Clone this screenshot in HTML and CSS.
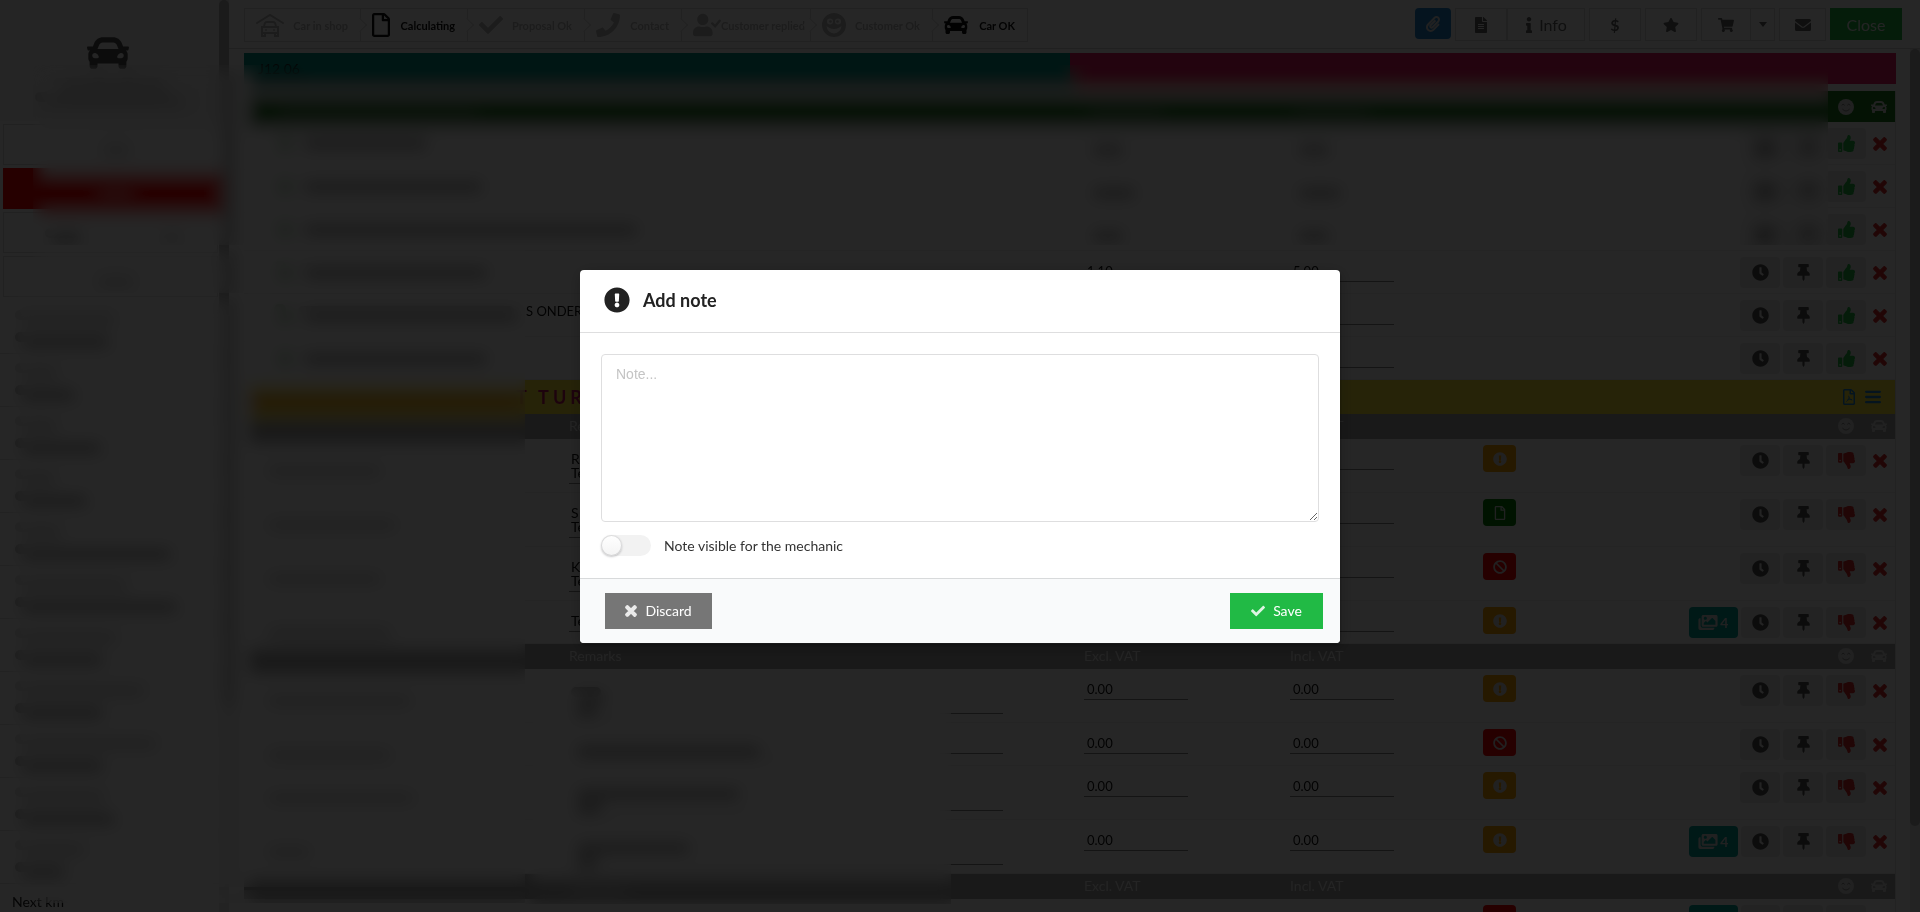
FILE: index.html
```html
<!DOCTYPE html>
<html lang="en">
<head>
  <meta charset="UTF-8">
  <meta name="viewport" content="width=device-width, initial-scale=1.0">
  <title>Workshop - Add note</title>
  <link rel="stylesheet" href="styles.css">
</head>
<body>
  <!-- Icon sprite -->
  <svg class="sprite" aria-hidden="true">
    <filter id="frost"><feGaussianBlur stdDeviation="8" edgeMode="duplicate"/><feOffset dx="5" dy="5"/></filter>
    <symbol id="car" viewBox="0 0 512 512"><path d="M499.99 176h-59.87l-16.64-41.6C406.38 91.63 365.57 64 319.5 64h-127c-46.06 0-86.88 27.63-103.99 70.4L71.87 176H12.01C4.2 176-1.53 183.34.37 190.91l6 24C7.7 220.25 12.5 224 18.01 224h20.07C24.65 235.73 16 252.78 16 272v48c0 16.12 6.16 30.67 16 41.93V416c0 17.67 14.33 32 32 32h32c17.67 0 32-14.33 32-32v-32h256v32c0 17.67 14.33 32 32 32h32c17.67 0 32-14.33 32-32v-54.07c9.84-11.25 16-25.8 16-41.93v-48c0-19.22-8.65-36.27-22.07-48H494c5.51 0 10.31-3.75 11.64-9.09l6-24c1.89-7.57-3.84-14.91-11.65-14.91zm-352.06-17.83c7.29-18.22 24.94-30.17 44.57-30.17h127c19.63 0 37.28 11.95 44.57 30.17L384 208H128l19.93-49.83zM96 319.8c-19.2 0-32-12.76-32-31.9S76.8 256 96 256s48 28.71 48 47.85-28.8 15.95-48 15.95zm320 0c-19.2 0-48 3.19-48-15.95S396.8 256 416 256s32 12.76 32 31.9-12.8 31.9-32 31.9z"/></symbol>
    <symbol id="garage" viewBox="0 0 28 24"><path d="M1 10L14 2l13 8" fill="none" stroke="currentColor" stroke-width="2" stroke-linecap="round"/><path d="M8 13l1-3q.6-1 2-1h6q1.400 0 2 1l1 3M6 14h16v6H6zM6 20v3h3v-3M19 20v3h3v-3" fill="none" stroke="currentColor" stroke-width="2"/><circle cx="10" cy="17" r="1"/><circle cx="18" cy="17" r="1"/></symbol>
    <symbol id="clock" viewBox="0 0 512 512"><path d="M256,8C119,8,8,119,8,256S119,504,256,504,504,393,504,256,393,8,256,8Zm92.49,313h0l-20,25a16,16,0,0,1-22.49,2.5h0l-67-49.72a40,40,0,0,1-15-31.23V112a16,16,0,0,1,16-16h32a16,16,0,0,1,16,16V256l58,42.5A16,16,0,0,1,348.49,321Z"/></symbol>
    <symbol id="pin" viewBox="0 0 384 512"><path d="M298.028 214.267L285.793 96H328c13.255 0 24-10.745 24-24V24c0-13.255-10.745-24-24-24H56C42.745 0 32 10.745 32 24v48c0 13.255 10.745 24 24 24h42.207L85.972 214.267C37.465 236.82 0 277.261 0 328c0 13.255 10.745 24 24 24h136v104.007c0 1.242.289 2.467.845 3.578l24 48c2.941 5.882 11.364 5.893 14.311 0l24-48a8.008 8.008 0 0 0 .845-3.578V352h136c13.255 0 24-10.745 24-24-.001-51.183-37.983-91.42-85.973-113.733z"/></symbol>
    <symbol id="up" viewBox="0 0 512 512"><path d="M104 224H24c-13.255 0-24 10.745-24 24v240c0 13.255 10.745 24 24 24h80c13.255 0 24-10.745 24-24V248c0-13.255-10.745-24-24-24zM64 472c-13.255 0-24-10.745-24-24s10.745-24 24-24 24 10.745 24 24-10.745 24-24 24zM384 81.452c0 42.416-25.97 66.208-33.277 94.548h101.723c33.397 0 59.397 27.746 59.553 58.098.084 17.938-7.546 37.249-19.439 49.197l-.11.11c9.836 23.337 8.237 56.037-9.308 79.469 8.681 25.895-.069 57.704-16.382 74.757 4.298 17.598 2.244 32.575-6.148 44.632C440.202 511.587 389.616 512 346.839 512l-2.845-.001c-48.287-.017-87.806-17.598-119.56-31.725-15.957-7.099-36.821-15.887-52.651-16.178-6.54-.12-11.783-5.457-11.783-11.998v-213.77c0-3.2 1.282-6.271 3.558-8.521 39.614-39.144 56.648-80.587 89.117-113.111 14.804-14.832 20.188-37.236 25.393-58.902C282.515 39.293 291.817 0 312 0c24 0 72 8 72 81.452z"/></symbol>
    <symbol id="down" viewBox="0 0 512 512"><path d="M0 56v240c0 13.255 10.745 24 24 24h80c13.255 0 24-10.745 24-24V56c0-13.255-10.745-24-24-24H24C10.745 32 0 42.745 0 56zm40 200c0-13.255 10.745-24 24-24s24 10.745 24 24-10.745 24-24 24-24-10.745-24-24zm272 256c-20.183 0-29.485-39.293-33.931-57.795-5.206-21.666-10.589-44.07-25.393-58.902-32.469-32.524-49.503-73.967-89.117-113.111a11.98 11.98 0 0 1-3.558-8.521V59.901c0-6.541 5.243-11.878 11.783-11.998 15.831-.29 36.694-9.079 52.651-16.178C256.189 17.598 295.709.017 343.995 0h2.844c42.777 0 93.363.413 113.774 29.737 8.392 12.057 10.446 27.034 6.148 44.632 16.312 17.053 25.063 48.863 16.382 74.757 17.544 23.432 19.143 56.132 9.308 79.469l.11.11c11.893 11.949 19.523 31.259 19.439 49.197-.156 30.352-26.157 58.098-59.553 58.098H350.723C358.03 364.34 384 388.132 384 430.548 384 504 336 512 312 512z"/></symbol>
    <symbol id="times" viewBox="-24 56 400 400"><path stroke="currentColor" stroke-width="36" d="M242.72 256l100.07-100.07c12.28-12.28 12.28-32.19 0-44.48l-22.24-22.24c-12.28-12.28-32.19-12.28-44.48 0L176 189.28 75.93 89.21c-12.28-12.28-32.19-12.28-44.48 0L9.21 111.45c-12.28 12.28-12.28 32.19 0 44.48L109.28 256 9.21 356.07c-12.28 12.28-12.28 32.19 0 44.48l22.24 22.24c12.28 12.28 32.2 12.28 44.48 0L176 322.72l100.07 100.07c12.28 12.28 32.2 12.28 44.48 0l22.24-22.24c12.28-12.28 12.28-32.19 0-44.48L242.72 256z"/></symbol>
    <symbol id="check" viewBox="0 0 512 512"><path d="M173.898 439.404l-166.4-166.4c-9.997-9.997-9.997-26.206 0-36.204l36.203-36.204c9.997-9.998 26.207-9.998 36.204 0L192 312.69 432.095 72.596c9.997-9.997 26.207-9.997 36.204 0l36.203 36.204c9.997 9.997 9.997 26.206 0 36.204l-294.4 294.401c-9.998 9.997-26.207 9.997-36.204-.001z"/></symbol>
    <symbol id="warn" viewBox="0 0 512 512"><path d="M504 256c0 136.997-111.043 248-248 248S8 392.997 8 256C8 119.083 119.043 8 256 8s248 111.083 248 248zm-248 50c-25.405 0-46 20.595-46 46s20.595 46 46 46 46-20.595 46-46-20.595-46-46-46zm-43.673-165.346l7.418 136c.347 6.364 5.609 11.346 11.982 11.346h48.546c6.373 0 11.635-4.982 11.982-11.346l7.418-136c.375-6.874-5.098-12.654-11.982-12.654h-63.383c-6.884 0-12.356 5.78-11.981 12.654z"/></symbol>
    <symbol id="ban" viewBox="0 0 512 512"><path d="M256 8C119.034 8 8 119.033 8 256s111.034 248 248 248 248-111.034 248-248S392.967 8 256 8zm130.108 117.892c65.448 65.448 70 165.481 20.677 235.637L150.47 105.216c70.204-49.356 170.226-44.735 235.638 20.676zM125.892 386.108c-65.448-65.448-70-165.481-20.677-235.637L361.53 406.784c-70.203 49.356-170.226 44.736-235.638-20.676z"/></symbol>
    <symbol id="file" viewBox="0 0 384 512"><path d="M369.9 97.9L286 14C277 5 264.8-.1 252.1-.1H48C21.5 0 0 21.5 0 48v416c0 26.5 21.5 48 48 48h288c26.5 0 48-21.5 48-48V131.9c0-12.7-5.1-25-14.1-34zM332.1 128H256V51.900l76.100 76.100zM48 464V48h160v104c0 13.300 10.700 24 24 24h104v288H48z"/></symbol>
    <symbol id="pdf" viewBox="0 0 384 512"><path d="M369.9 97.9L286 14C277 5 264.8-.1 252.1-.1H48C21.5 0 0 21.5 0 48v416c0 26.5 21.5 48 48 48h288c26.5 0 48-21.5 48-48V131.9c0-12.7-5.1-25-14.1-34zM332.1 128H256V51.900l76.100 76.100zM48 464V48h160v104c0 13.300 10.700 24 24 24h104v288H48z"/><path d="M180 215c14 60 20 110 115 140M195 270c-20 70-50 110-90 135M140 350c50-20 90-20 150-10" fill="none" stroke="currentColor" stroke-width="28"/></symbol>
    <symbol id="filealt" viewBox="0 0 384 512"><path d="M224 136V0H24C10.7 0 0 10.7 0 24v464c0 13.3 10.7 24 24 24h336c13.3 0 24-10.7 24-24V160H248c-13.2 0-24-10.8-24-24zm64 236c0 6.6-5.4 12-12 12H108c-6.6 0-12-5.4-12-12v-8c0-6.6 5.4-12 12-12h168c6.6 0 12 5.4 12 12v8zm0-64c0 6.6-5.4 12-12 12H108c-6.6 0-12-5.4-12-12v-8c0-6.6 5.4-12 12-12h168c6.6 0 12 5.4 12 12v8zm0-72v8c0 6.6-5.4 12-12 12H108c-6.6 0-12-5.4-12-12v-8c0-6.6 5.4-12 12-12h168c6.6 0 12 5.4 12 12zm96-114.1v6.1H256V0h6.100c6.400 0 12.500 2.500 17 7l97.900 98c4.500 4.500 7 10.600 7 16.900z"/></symbol>
    <symbol id="images" viewBox="0 0 576 512"><path d="M480 416v16c0 26.51-21.49 48-48 48H48c-26.51 0-48-21.49-48-48V176c0-26.51 21.49-48 48-48h16v208c0 44.112 35.888 80 80 80h336zm96-80V80c0-26.51-21.49-48-48-48H144c-26.51 0-48 21.49-48 48v256c0 26.51 21.49 48 48 48h384c26.51 0 48-21.49 48-48zM256 128c0 26.51-21.49 48-48 48s-48-21.49-48-48 21.49-48 48-48 48 21.49 48 48zm-96 144l55.515-55.515c4.686-4.686 12.284-4.686 16.971 0L272 256l135.515-135.515c4.686-4.686 12.284-4.686 16.971 0L512 208v112H160v-48z"/></symbol>
    <symbol id="star" viewBox="0 0 576 512"><path d="M259.3 17.8L194 150.2 47.9 171.5c-26.2 3.8-36.7 36.1-17.7 54.6l105.7 103-25 145.5c-4.5 26.3 23.2 46 46.4 33.7L288 439.6l130.7 68.7c23.2 12.2 50.9-7.4 46.4-33.7l-25-145.5 105.7-103c19-18.5 8.5-50.8-17.7-54.6L382 150.2 316.7 17.8c-11.7-23.6-45.6-23.9-57.4 0z"/></symbol>
    <symbol id="cart" viewBox="0 0 576 512"><path d="M528.12 301.319l47.273-208C578.806 78.301 567.391 64 551.99 64H159.208l-9.166-44.81C147.758 8.021 137.93 0 126.529 0H24C10.745 0 0 10.745 0 24v16c0 13.255 10.745 24 24 24h69.883l70.248 343.435C147.325 417.1 136 435.222 136 456c0 30.928 25.072 56 56 56s56-25.072 56-56c0-15.674-6.447-29.835-16.824-40h209.647C430.447 426.165 424 440.326 424 456c0 30.928 25.072 56 56 56s56-25.072 56-56c0-22.172-12.888-41.332-31.579-50.405l5.517-24.276c3.413-15.018-8.002-29.319-23.403-29.319H218.117l-6.545-32h293.145c11.206 0 20.92-7.754 23.403-18.681z"/></symbol>
    <symbol id="mail" viewBox="0 0 512 512"><path d="M48 64h416q48 0 48 48v18L284 300q-28 20-56 0L0 130v-18q0-48 48-48zM0 176l212 156q44 30 88 0l212-156v224q0 48-48 48H48q-48 0-48-48z"/></symbol>
    <symbol id="info" viewBox="0 0 192 512"><path d="M20 424.229h20V279.771H20c-11.046 0-20-8.954-20-20V212c0-11.046 8.954-20 20-20h112c11.046 0 20 8.954 20 20v212.229h20c11.046 0 20 8.954 20 20V492c0 11.046-8.954 20-20 20H20c-11.046 0-20-8.954-20-20v-47.771c0-11.046 8.954-20 20-20zM96 0C56.235 0 24 32.235 24 72s32.235 72 72 72 72-32.235 72-72S135.764 0 96 0z"/></symbol>
    <symbol id="clip" viewBox="0 0 448 512"><path d="M43.246 466.142c-58.43-60.289-57.341-157.511 1.386-217.581L254.392 34c44.316-45.332 116.351-45.336 160.671 0 43.89 44.894 43.943 117.329 0 162.276L232.214 383.128c-29.855 30.537-78.633 30.111-107.982-.998-28.275-29.97-27.368-77.473 1.452-106.953l143.743-146.835c6.182-6.314 16.312-6.422 22.626-.241l22.861 22.379c6.315 6.182 6.422 16.312.241 22.626L171.427 319.927c-4.932 5.045-5.236 13.428-.648 18.292 4.372 4.634 11.245 4.711 15.688.165l182.849-186.851c19.613-20.062 19.613-52.725-.011-72.798-19.189-19.627-49.957-19.637-69.154 0L90.39 293.295c-34.763 35.56-35.299 93.12-1.191 128.313 34.01 35.093 88.985 35.137 123.058.286l172.06-175.999c6.177-6.319 16.307-6.433 22.626-.256l22.877 22.364c6.319 6.177 6.434 16.307.256 22.626l-172.06 175.998c-59.576 60.938-155.943 60.216-214.77-.485z"/></symbol>
    <symbol id="phone" viewBox="0 0 512 512"><path d="M493.4 24.6l-104-24c-11.3-2.6-22.900 3.300-27.500 13.900l-48 112c-4.200 9.800-1.400 21.300 6.900 28l60.600 49.600c-36 76.700-98.900 140.500-177.200 177.200l-49.600-60.600c-6.800-8.300-18.200-11.100-28-6.900l-112 48C3.900 366.500-2 378.100.6 389.400l24 104C27.100 504.200 36.700 512 48 512c256.100 0 464-207.500 464-464 0-11.200-7.700-20.900-18.600-23.400z"/></symbol>
    <symbol id="usercheck" viewBox="0 0 640 512"><path d="M224 256c70.7 0 128-57.3 128-128S294.7 0 224 0 96 57.3 96 128s57.3 128 128 128zm89.600 32h-16.700c-22.200 10.200-46.900 16-72.900 16s-50.600-5.800-72.900-16h-16.700C60.200 288 0 348.200 0 422.400V464c0 26.500 21.500 48 48 48h352c26.500 0 48-21.500 48-48v-41.600c0-74.200-60.200-134.400-134.400-134.400z"/><path d="M440 220l65 65 105-125" fill="none" stroke="currentColor" stroke-width="56" stroke-linecap="round"/></symbol>
    <symbol id="grin" viewBox="0 0 24 24"><path fill-rule="evenodd" d="M12 0a12 12 0 1 0 0 24a12 12 0 0 0 0-24zM8 5.500a3 3 0 1 1 0 6a3 3 0 0 1 0-6zm8 0a3 3 0 1 1 0 6a3 3 0 0 1 0-6zM4.500 13q1.500 1 3 2q4.500 2 9 0q1.500-1 3-2q-1 7-7.500 7.500q-6.500-.5-7.500-7.500z"/><circle cx="8.500" cy="8.500" r="1.300"/><circle cx="15.500" cy="8.500" r="1.300"/></symbol>
    <symbol id="smile" viewBox="0 0 24 24"><circle cx="12" cy="12" r="12"/><path class="face" d="M5.500 9.500q2-3.500 4.500 0M14 9.500q2-3.500 4.500 0M6.500 15q5.500 6 11 0"/></symbol>
    <symbol id="bars" viewBox="0 0 14 14"><path d="M1 2.500h12M1 7h12M1 11.500h12" stroke="currentColor" stroke-width="2" stroke-linecap="round"/></symbol>
    <symbol id="caret" viewBox="0 0 10 6"><path d="M1 0h8L5 5z"/></symbol>
  </svg>

  <div class="app">
    <aside class="sidebar">
      <div class="sidebar-content">
        <div class="vehicle">
          <svg class="icon vehicle-icon"><use href="#car"/></svg>
          <span class="smudge light" style="width: 110px"></span>
          <span class="smudge light" style="width: 145px"></span>
        </div>
        <div class="boxes">
          <div class="box"><span class="smudge light" style="width: 30px"></span></div>
          <div class="box alert"><span class="smudge pale" style="width: 34px"></span></div>
          <div class="box split"><span class="smudge" style="width: 32px"></span><span class="smudge light" style="width: 18px"></span></div>
          <div class="box"><span class="smudge light" style="width: 40px"></span></div>
        </div>
        <div class="fields"></div>
      </div>
      <div class="scrollbar"><div class="thumb side-thumb"></div></div>
    </aside>

    <div class="workspace">
      <header class="topbar">
        <ol class="steps">
          <li class="step step-shop"><svg class="icon large"><use href="#garage"/></svg>Car in shop</li>
          <li class="step step-calc active"><svg class="icon large"><use href="#file"/></svg>Calculating</li>
          <li class="step step-proposal"><svg class="icon large"><use href="#check"/></svg>Proposal Ok</li>
          <li class="step step-contact"><svg class="icon large"><use href="#phone"/></svg>Contact</li>
          <li class="step step-replied"><svg class="icon large"><use href="#usercheck"/></svg>Customer replied</li>
          <li class="step step-ok"><svg class="icon large"><use href="#grin"/></svg>Customer Ok</li>
          <li class="step step-car active"><svg class="icon large"><use href="#car"/></svg>Car OK</li>
        </ol>
        <div class="tools">
          <button class="tool attach" aria-label="Attachments"><svg class="icon"><use href="#clip"/></svg></button>
          <div class="tool-group">
            <button class="tool" aria-label="Document"><svg class="icon"><use href="#filealt"/></svg></button>
            <button class="tool info"><svg class="icon narrow"><use href="#info"/></svg>Info</button>
          </div>
          <button class="tool dollar">$</button>
          <button class="tool" aria-label="Favourite"><svg class="icon"><use href="#star"/></svg></button>
          <div class="tool-group">
            <button class="tool cart" aria-label="Cart"><svg class="icon"><use href="#cart"/></svg></button>
            <button class="tool more" aria-label="More"><svg class="icon caret"><use href="#caret"/></svg></button>
          </div>
          <button class="tool mail" aria-label="Mail"><svg class="icon"><use href="#mail"/></svg></button>
          <button class="tool close">Close</button>
        </div>
      </header>

      <div class="content">
        <main class="sheet">
          <div class="banner">
            <div class="banner-teal">J12 06</div>
            <div class="banner-pink"></div>
          </div>
          <table class="lines">
            <colgroup>
              <col class="col-name"><col><col class="col-price"><col class="col-incl"><col class="col-price"><col class="col-actions">
            </colgroup>
            <tbody></tbody>
          </table>
        </main>
        <div class="scrollbar"><div class="thumb main-thumb"></div></div>
      </div>
    </div>

    <!-- Frosted areas hide customer data -->
    <div class="frost frost-top"></div>
    <div class="frost frost-boxes"></div>
    <div class="frost frost-left"></div>
    <div class="frost frost-bottom"></div>
    <div class="frost frost-edge"></div>
  </div>

  <div class="dimmer">
    <form class="modal" role="dialog" aria-labelledby="modal-title">
      <div class="modal-header">
        <svg class="icon modal-icon"><use href="#warn"/></svg>
        <h1 id="modal-title">Add note</h1>
      </div>
      <div class="modal-body">
        <textarea class="note" placeholder="Note..." aria-label="Note"></textarea>
        <label class="toggle"><input type="checkbox">Note visible for the mechanic</label>
      </div>
      <div class="modal-actions">
        <button type="button" class="btn discard"><svg class="icon"><use href="#times"/></svg>Discard</button>
        <button type="button" class="btn save"><svg class="icon"><use href="#check"/></svg>Save</button>
      </div>
    </form>
  </div>

  <script>
    const icon = name => `<svg class="icon"><use href="#${name}"/></svg>`;
    const smudge = (width, type = '') => `<span class="smudge ${type}" style="width: ${width}px"></span>`;

    // [label width, value width]
    const fields = [[96, 90], [38, 56], [38, 82], [36, 68], [42, 152], [108, 158], [98, 84], [126, 84], [138, 84], [86, 96], [66, 46]];
    document.querySelector('.fields').innerHTML = fields.map(([label, value]) =>
      `<div class="field">${smudge(label, 'light')}${smudge(value)}</div>`
    ).join('') + '<div class="field">Next km</div>';

    // Line items of the first group, status is always approved
    const approved = [
      { name: 125, excl: '', incl: '' },
      { name: 180, excl: '', incl: '' },
      { name: 335, excl: '', incl: '' },
      { name: 185, excl: '1.10', incl: '5.00' },
      { name: 216, text: 'S ONDERHOUD', excl: '0.00', incl: '0.00' },
      { name: 185, excl: '0.00', incl: '0.00' }
    ];
    const inspection = [
      { name: 115, note: 'R\nTe', status: 'warn' },
      { name: 130, note: 'S\nTe', status: 'file' },
      { name: 115, note: 'K\nTe', status: 'ban' },
      { name: 125, note: 'Te', status: 'warn', photos: 4 }
    ];
    const checks = [
      { name: 145, smudges: [30, 22], status: 'warn' },
      { name: 125, smudges: [185], status: 'ban' },
      { name: 148, smudges: [165, 26], status: 'warn' },
      { name: 44, smudges: [115, 22], status: 'warn', photos: 4 }
    ];

    const price = (value, label) => `<input class="price" value="${value}" aria-label="${label}">`;

    function actions(vote, photos) {
      const badge = photos ? `<button class="act photos" aria-label="Photos">${icon('images')}${photos}</button>` : '';
      return `<div class="actions">${badge}
        <button class="act" aria-label="Time">${icon('clock')}</button>
        <button class="act" aria-label="Pin">${icon('pin')}</button>
        <button class="act ${vote}" aria-label="Vote">${icon(vote)}</button>
        <button class="remove" aria-label="Remove">${icon('times')}</button>
      </div>`;
    }

    function approvedRow(item, index) {
      const value = (text, width) => index < 3 ? smudge(width) : price(text, 'Price');
      return `<tr class="short">
        <td colspan="2"><div class="item-name">${smudge(12, 'mark')}${smudge(item.name)}${item.text || ''}</div></td>
        <td>${value(item.excl, index === 1 ? 44 : 32)}</td><td>${value(item.incl, index === 1 ? 44 : 32)}</td>
        <td></td><td>${actions('up')}</td>
      </tr>`;
    }

    function checkRow(item) {
      const lines = item.note ? item.note.split('\n').length : item.smudges.length;
      const note = item.note || '';
      return `<tr class="${lines > 1 ? 'tall' : 'short'}">
        <td><div class="check-name">${smudge(item.name, 'light')}</div></td>
        <td><div class="remark">
          <textarea class="remark-text" rows="${lines}" aria-label="Remarks">${note}</textarea>
          ${item.smudges ? `<div class="remark-cover">${item.smudges.map(w => smudge(w)).join('')}</div>` : ''}
        </div></td>
        <td>${price('0.00', 'Excl. VAT')}</td><td>${price('0.00', 'Incl. VAT')}</td>
        <td><button class="status ${item.status}" aria-label="Status">${icon(item.status)}</button></td>
        <td>${actions('down', item.photos)}</td>
      </tr>`;
    }

    const headIcons = `<div class="head-icons">${icon('smile')}${icon('car')}</div>`;
    const groupHead = `<tr class="group-head"><th></th><th>Remarks</th><th>Excl. VAT</th><th>Incl. VAT</th><th></th><th>${headIcons}</th></tr>`;

    document.querySelector('.lines tbody').innerHTML = `
      <tr class="green-head">
        <th colspan="2"><div class="item-name">${smudge(200, 'faint')}</div></th>
        <th>${smudge(75, 'faint')}</th><th>${smudge(75, 'faint')}</th><th></th><th>${headIcons}</th>
      </tr>
      ${approved.map(approvedRow).join('')}
      <tr class="yellow-head">
        <th colspan="5"><div class="yellow-title">${smudge(272, 'rust')}T TUR</div></th>
        <th><div class="links"><a href="#pdf" aria-label="PDF">${icon('pdf')}</a><a href="#menu" aria-label="Menu">${icon('bars')}</a></div></th>
      </tr>
      ${groupHead}
      ${inspection.map(checkRow).join('')}
      ${groupHead}
      ${checks.map(checkRow).join('')}
      ${groupHead}
      ${checkRow({ name: 115, note: ' ', status: 'ban', photos: ' ' })}`;
  </script>
</body>
</html>
```

FILE: styles.css
```css
/* General */
* {
  box-sizing: border-box;
}

body {
  margin: 0;
  font-family: Lato, 'Liberation Sans', sans-serif;
  font-size: 14px;
  color: #222;
  background-color: #fff;
  overflow: hidden;
}

button, input, textarea {
  font-family: inherit;
  font-size: 14px;
}

button {
  border: none;
  padding: 0;
  cursor: pointer;
}

.sprite {
  display: block;
  width: 0;
  height: 0;
}

.icon {
  width: 16px;
  height: 16px;
  fill: currentColor;
  flex: none;
}

.face {
  fill: none;
  stroke: #888;
  stroke-width: 1.5;
}

.app {
  position: relative;
  display: flex;
  height: 100vh;
  overflow: hidden;
}

/* Grey strips that stand in for hidden data */
.smudge {
  display: block;
  flex: none;
  height: 10px;
  border-radius: 5px;
  background-color: #999;
}

.smudge.light {
  background-color: #ccc;
}

.smudge.pale {
  background-color: #f66;
}

.smudge.faint {
  background-color: #5c8a5c;
}

.smudge.mark {
  background-color: #9c9;
  height: 14px;
}

.smudge.rust {
  background-color: #e8802a;
}

.frost {
  position: absolute;
  backdrop-filter: url(#frost);
}

.frost-top {
  left: 33px;
  right: 92px;
  top: 65px;
  height: 180px;
}

.frost-boxes {
  left: 33px;
  width: 492px;
  top: 245px;
  height: 48px;
}

.frost-left {
  left: 9px;
  width: 516px;
  top: 293px;
  height: 594px;
}

.frost-bottom {
  left: 525px;
  width: 426px;
  top: 680px;
  height: 224px;
}

.frost-edge {
  left: 33px;
  width: 492px;
  top: 887px;
  height: 17px;
}

/* Scrollbars */
.scrollbar {
  width: 10px;
  flex: none;
  background-color: #e8e8e8;
}

.thumb {
  border-radius: 5px;
  background-color: #b4b4b4;
}

.side-thumb {
  height: 77%;
}

.main-thumb {
  height: 90%;
}

/* Sidebar */
.sidebar {
  display: flex;
  width: 229px;
  flex: none;
}

.sidebar-content {
  flex: 1;
}

.vehicle {
  height: 121px;
  padding: 32px 4px 0 0;
  display: flex;
  flex-direction: column;
  align-items: center;
  gap: 4px;
  background-color: #f3f3f3;
}

.vehicle-icon {
  width: 42px;
  height: 42px;
  color: #555;
}

.boxes {
  display: flex;
  flex-direction: column;
  gap: 3px;
  padding: 3px 1px 4px 3px;
}

.box {
  display: flex;
  align-items: center;
  justify-content: center;
  height: 41px;
  border: 1px solid #ddd;
}

.box.alert {
  border: none;
  background-color: #f00;
}

.box.split {
  justify-content: space-around;
}

.field {
  display: flex;
  flex-direction: column;
  gap: 12px;
  height: 53px;
  padding: 9px 12px;
  border-bottom: 1px solid #e4e4e4;
}

.field .smudge {
  margin-left: 3px;
}

/* Top bar */
.workspace {
  flex: 1;
  min-width: 0;
  display: flex;
  flex-direction: column;
}

.topbar {
  display: flex;
  justify-content: space-between;
  align-items: flex-start;
  height: 49px;
  flex: none;
  padding: 8px 18px 0 15px;
  border-bottom: 1px solid #d8d8d8;
}

.steps {
  display: flex;
  margin: 0;
  padding: 0;
  list-style: none;
  border: 1px solid #ddd;
}

.step {
  position: relative;
  display: flex;
  align-items: center;
  justify-content: space-between;
  height: 32px;
  padding: 0 12px 0 11px;
  border-right: 1px solid #ddd;
  font-size: 11px;
  font-weight: bold;
  white-space: nowrap;
  color: #bbb;
}

.step:last-child {
  border-right: none;
}

.step.active {
  color: #111;
}

/* Arrow tip that points at the next step */
.step:not(:last-child)::after {
  content: '';
  position: absolute;
  right: -5px;
  top: 11px;
  width: 9px;
  height: 9px;
  background-color: #fff;
  border: 1px solid #ddd;
  border-left: none;
  border-bottom: none;
  transform: rotate(45deg);
}

.icon.large {
  width: 24px;
  height: 24px;
}

.step-shop { width: 116px; }
.step-shop .icon { width: 28px; }
.step-calc { width: 107px; padding-left: 8px; }
.step-proposal { width: 117px; }
.step-contact { width: 97px; }
.step-replied { width: 129px; padding-right: 9px; }
.step-replied .icon { width: 28px; }
.step-ok { width: 122px; }
.step-car { width: 94px; }

.tools {
  display: flex;
  gap: 4px;
}

.tool-group {
  display: flex;
}

.tool {
  display: flex;
  align-items: center;
  justify-content: center;
  gap: 6px;
  width: 52px;
  height: 33px;
  background-color: #fff;
  border: 1px solid #ddd;
  color: #666;
}

.tool.attach {
  width: 36px;
  height: 31px;
  border: none;
  border-radius: 4px;
  background-color: #2185d0;
  color: #ddd;
}

.tool.info {
  width: 78px;
  font-size: 16px;
}

.tool .narrow {
  width: 8px;
}

.tool.dollar {
  font-size: 16px;
  font-weight: bold;
}

.tool.cart {
  width: 49px;
  border-right: none;
}

.tool.more {
  width: 25px;
}

.tool .caret {
  width: 10px;
  height: 6px;
}

.tool.mail {
  width: 47px;
}

.tool.close {
  width: 72px;
  height: 32px;
  border: none;
  background-color: #21ba45;
  color: #eee;
  font-size: 16px;
}

/* Sheet */
.content {
  flex: 1;
  min-height: 0;
  display: flex;
}

.sheet {
  flex: 1;
  min-width: 0;
  padding: 4px 14px 0 15px;
}

.banner {
  display: flex;
  height: 31px;
  margin-bottom: 7px;
}

.banner-teal, .banner-pink {
  flex: 1;
  padding: 7px 14px;
}

.banner-teal {
  background-color: #009688;
}

.banner-pink {
  background-color: #e91e63;
}

.lines {
  width: 100%;
  table-layout: fixed;
  border-collapse: separate;
  border-spacing: 0;
  border-right: 1px solid #e4e4e4;
}

.col-name { width: 325px; }
.col-price { width: 206px; }
.col-incl { width: 193px; }
.col-actions { width: 206px; }

.lines td {
  padding: 6px 0 0;
  vertical-align: top;
  border-bottom: 1px solid #eee;
}

.lines th {
  padding: 0;
  text-align: left;
  font-weight: normal;
}

.lines .group-head th {
  padding-bottom: 2px;
}

.short { height: 43px; }
.tall { height: 54px; }

.green-head {
  height: 31px;
  background-color: #1b7a1b;
}

.yellow-head {
  height: 34px;
  background-color: #ffeb3b;
}

.group-head {
  height: 25px;
  background-color: #a6a6a6;
  color: #eee;
}

.item-name {
  display: flex;
  align-items: center;
  gap: 12px;
  height: 22px;
  padding-left: 30px;
  white-space: nowrap;
  font-size: 13px;
  color: #111;
}

.check-name {
  padding: 16px 0 0 18px;
}

.yellow-title {
  display: flex;
  align-items: center;
  font-size: 18px;
  font-weight: bold;
  letter-spacing: 4px;
  color: #c2185b;
}

.links, .head-icons {
  display: flex;
  justify-content: flex-end;
  align-items: center;
}

.links {
  gap: 8px;
  padding-right: 14px;
}

.links a {
  display: flex;
  color: #2185d0;
}

.head-icons {
  gap: 17px;
  padding-right: 8px;
  color: #ddd;
}

.remark {
  position: relative;
}

.remark-text {
  display: block;
  width: 434px;
  padding: 7px 2px 3px;
  border: none;
  border-bottom: 1px solid #888;
  line-height: 14px;
  color: #111;
  background: none;
  resize: none;
  overflow: hidden;
}

.remark-cover {
  position: absolute;
  left: 2px;
  top: 12px;
  display: grid;
  gap: 4px;
}

.price {
  display: block;
  width: 104px;
  height: 25px;
  padding: 4px 3px 0;
  border: none;
  border-bottom: 1px solid #888;
  font-size: 13px;
  color: #111;
  background: none;
}

.lines td > .smudge {
  margin: 12px 0 0 3px;
}

.status {
  display: flex;
  align-items: center;
  justify-content: center;
  width: 33px;
  height: 27px;
  border-radius: 4px;
  color: #ddd;
}

.status .icon {
  width: 14px;
  height: 14px;
}

.status.warn { background-color: #ffa500; }
.status.file { background-color: #008000; }
.status.ban { background-color: #f00; }

.actions {
  display: flex;
  justify-content: flex-end;
  gap: 3px;
  padding-right: 8px;
}

.act {
  display: flex;
  align-items: center;
  justify-content: center;
  gap: 2px;
  width: 40px;
  height: 31px;
  border-radius: 4px;
  background-color: #eaeaea;
  color: #555;
}

.act .icon {
  width: 17px;
  height: 17px;
}

.act.up { color: #21ba45; }
.act.down { color: #db2828; }

.act.photos {
  width: 49px;
  background-color: #00a59d;
  color: #ddd;
  font-weight: bold;
}

.act.photos .icon {
  width: 20px;
}

.remove {
  display: flex;
  align-items: center;
  margin-left: 4px;
  background: none;
  color: #db2828;
}

.remove .icon {
  width: 14px;
  height: 14px;
}

/* Modal */
.dimmer {
  position: fixed;
  inset: 0;
  display: flex;
  align-items: center;
  justify-content: center;
  background-color: rgba(0, 0, 0, 0.85);
}

.modal {
  width: 760px;
  border-radius: 4px;
  overflow: hidden;
  background-color: #fff;
  box-shadow: 1px 3px 3px rgba(0, 0, 0, 0.2), 1px 3px 15px 2px rgba(0, 0, 0, 0.2);
}

.modal-header {
  display: flex;
  align-items: center;
  gap: 13px;
  height: 63px;
  padding: 0 24px 2px;
  border-bottom: 1px solid #dededf;
}

.modal-icon {
  width: 26px;
  height: 26px;
}

.modal-header h1 {
  margin: 0;
  font-size: 18px;
  line-height: 22px;
}

.modal-body {
  display: flex;
  flex-direction: column;
  gap: 13px;
  padding: 21px;
}

.note {
  display: block;
  width: 100%;
  height: 168px;
  padding: 10px 14px;
  border: 1px solid #dededf;
  border-radius: 4px;
  font-family: 'Liberation Sans', sans-serif;
  line-height: 18px;
  resize: vertical;
}

.note::placeholder {
  color: #c4c4c4;
}

.toggle {
  display: flex;
  align-items: center;
  gap: 13px;
  height: 22px;
  color: #333;
}

.toggle input {
  appearance: none;
  width: 50px;
  height: 21px;
  margin: 0;
  border-radius: 11px;
  background-color: #f2f2f2;
}

.toggle input::before {
  content: '';
  display: block;
  width: 21px;
  height: 21px;
  border-radius: 50%;
  background: linear-gradient(#fff, #f4f4f4);
  box-shadow: 0 1px 2px rgba(34, 36, 38, 0.25), 0 0 0 1px rgba(34, 36, 38, 0.15) inset;
}

.modal-actions {
  display: flex;
  justify-content: space-between;
  padding: 14px 17px 14px 25px;
  background-color: #f9fafb;
  border-top: 1px solid #d8dadb;
}

.btn {
  display: flex;
  align-items: center;
  justify-content: center;
  gap: 8px;
  height: 36px;
  color: #fff;
}

.btn .icon {
  width: 14px;
  opacity: 0.85;
}

.discard {
  width: 107px;
  background-color: #767676;
}

.discard .icon {
  width: 12px;
  height: 12px;
}

.save {
  width: 93px;
  background-color: #21ba45;
}
```
